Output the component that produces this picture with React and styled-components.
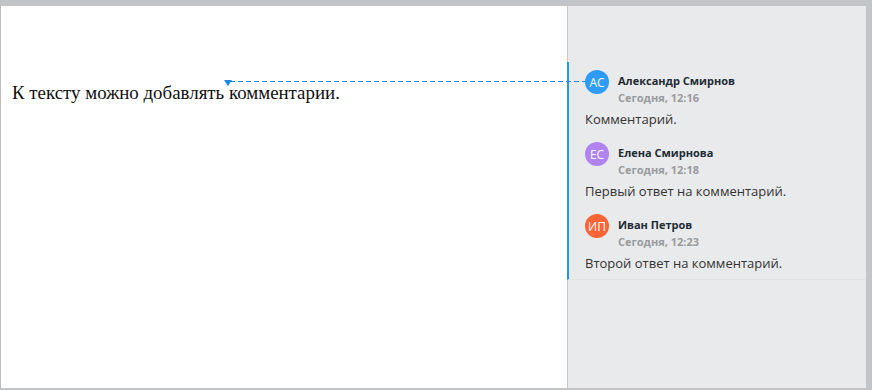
import React from "react";
import styled, { createGlobalStyle } from "styled-components";

const GlobalStyle = createGlobalStyle`
  html, body {
    margin: 0;
    padding: 0;
    background: #c2c5c8;
  }
`;

const comments = [
  { initials: "АС", name: "Александр Смирнов", time: "Сегодня, 12:16", text: "Комментарий.", color: "#2e9bf6" },
  { initials: "ЕС", name: "Елена Смирнова", time: "Сегодня, 12:18", text: "Первый ответ на комментарий.", color: "#b083f0" },
  { initials: "ИП", name: "Иван Петров", time: "Сегодня, 12:23", text: "Второй ответ на комментарий.", color: "#ff6436" },
];

const Window = styled.div`
  position: relative;
  width: 872px;
  height: 390px;
  box-sizing: border-box;
  border-top: 6px solid #c2c5c8;
  border-left: 1px solid #bcbcbc;
  border-right: 6px solid #c2c5c8;
  border-bottom: 2px solid #c2c5c8;
  display: flex;
  overflow: hidden;
`;

const Page = styled.div`
  width: 567px;
  background: #fff;
  border-right: 1px solid #c6c8ca;
  padding: 75px 0 0 11px;
  box-sizing: border-box;
`;

const Paragraph = styled.p`
  margin: 0;
  font-family: "Liberation Serif", "Times New Roman", serif;
  font-size: 18.9px;
  line-height: 24px;
  color: #111;
`;

const Sidebar = styled.div`
  flex: 1;
  background: #e9eaec;
  padding-top: 56px;
`;

const Thread = styled.div`
  margin-left: -1px;
  border-left: 2px solid #1e96f3;
  border-bottom: 1px solid #e2e3e5;
  padding: 8px 16px 7px 16px;
  display: flex;
  flex-direction: column;
  gap: 14px;
`;

const Comment = styled.div`
  display: flex;
  flex-direction: column;
  font-family: "Open Sans", "Noto Sans", sans-serif;
`;

const Header = styled.div`
  display: flex;
  align-items: flex-start;
  gap: 9px;
`;

const Avatar = styled.div`
  width: 24px;
  height: 24px;
  border-radius: 50%;
  background: ${(p) => p.color};
  color: #fff;
  font-size: 12px;
  display: flex;
  align-items: center;
  justify-content: center;
  flex-shrink: 0;
`;

const Meta = styled.div`
  padding-top: 2px;
  display: flex;
  flex-direction: column;
`;

const Name = styled.div`
  font-size: 11px;
  font-weight: 700;
  line-height: 17px;
  color: #222a33;
`;

const Time = styled.div`
  font-size: 11px;
  font-weight: 700;
  line-height: 17px;
  color: #9a9b9d;
`;

const Text = styled.div`
  margin-top: 4px;
  font-size: 13px;
  line-height: 18px;
  color: #333;
`;

const Connector = styled.div`
  position: absolute;
  left: 229px;
  top: 75px;
  width: 356px;
  height: 1px;
  background: repeating-linear-gradient(to right, #1e88e5 0 5px, transparent 5px 8px);
`;

const Marker = styled.div`
  position: absolute;
  left: 223px;
  top: 74px;
  width: 0;
  height: 0;
  border-left: 4px solid transparent;
  border-right: 4px solid transparent;
  border-top: 6px solid #1e88e5;
`;

export default function App() {
  return (
    <>
      <GlobalStyle />
      <Window>
        <Page>
          <Paragraph>К тексту можно добавлять комментарии.</Paragraph>
        </Page>
        <Sidebar>
          <Thread>
            {comments.map((c) => (
              <Comment key={c.time}>
                <Header>
                  <Avatar color={c.color}>{c.initials}</Avatar>
                  <Meta>
                    <Name>{c.name}</Name>
                    <Time>{c.time}</Time>
                  </Meta>
                </Header>
                <Text>{c.text}</Text>
              </Comment>
            ))}
          </Thread>
        </Sidebar>
        <Connector />
        <Marker />
      </Window>
    </>
  );
}
